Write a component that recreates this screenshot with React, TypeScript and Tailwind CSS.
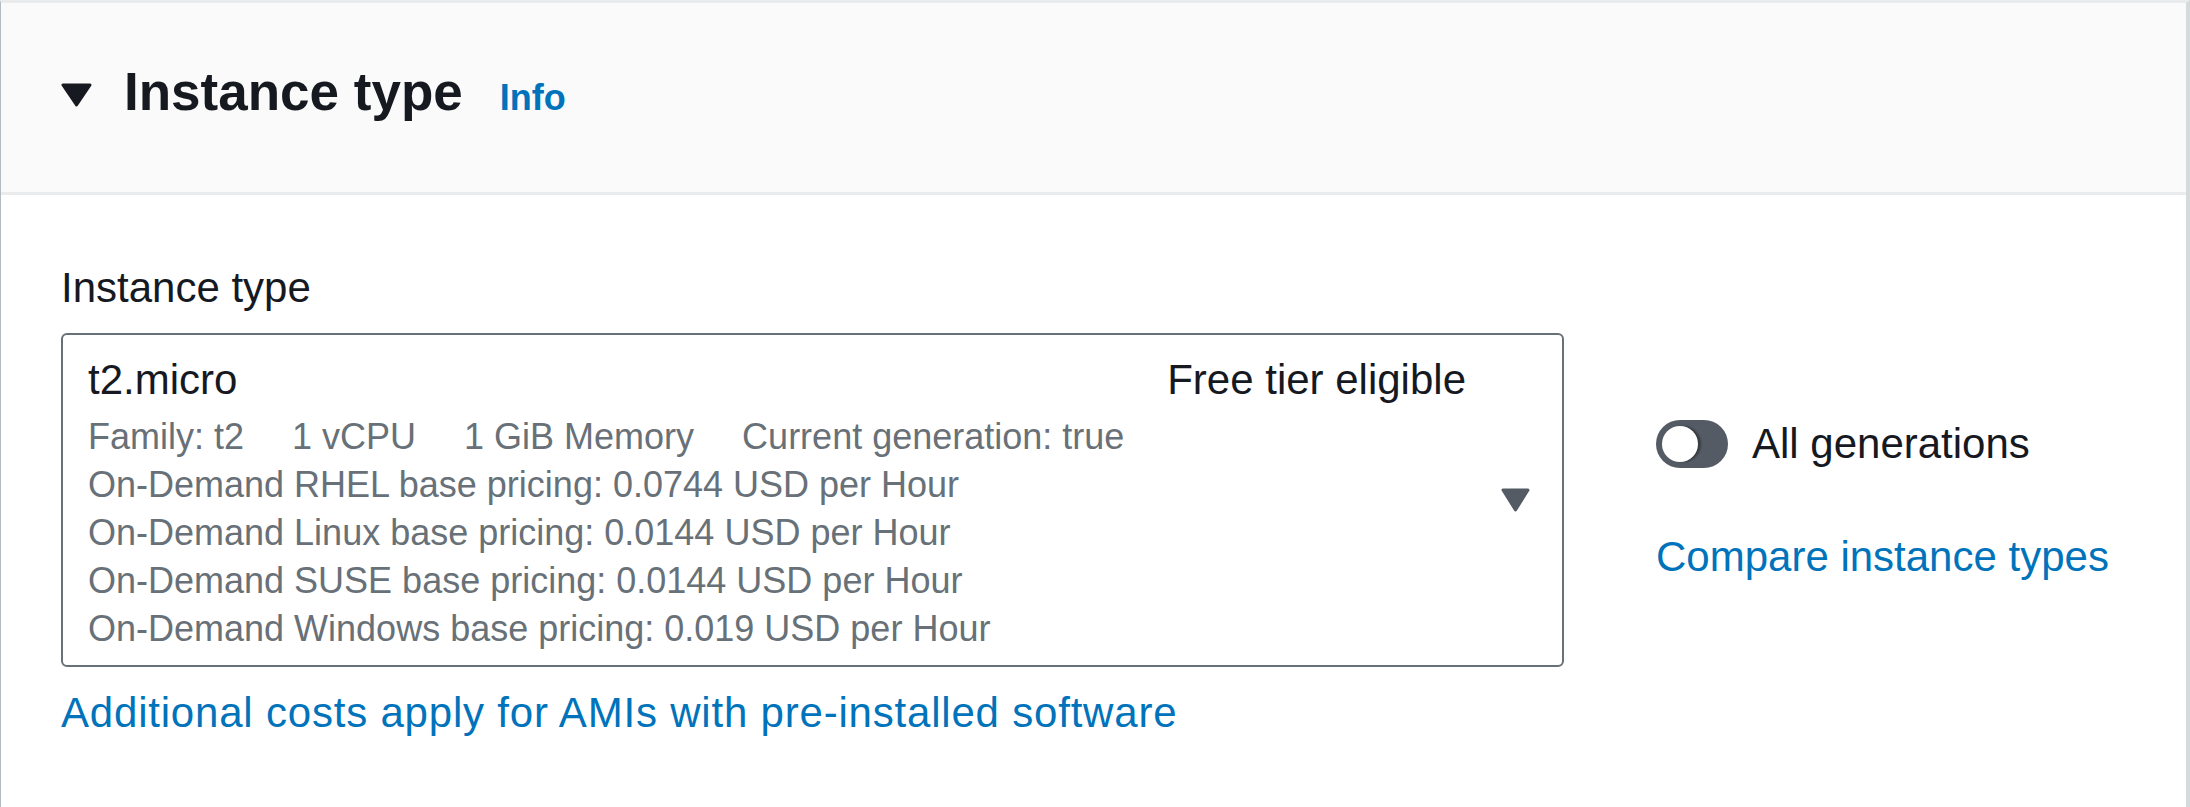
import React from "react";

function CaretDown({ w, h, color }: { w: number; h: number; color: string }) {
  return (
    <svg width={w} height={h} viewBox={`0 0 ${w} ${h}`} className="shrink-0">
      <polygon
        points={`2,2 ${w - 2},2 ${w / 2},${h - 2}`}
        fill={color}
        stroke={color}
        strokeWidth={3}
        strokeLinejoin="round"
      />
    </svg>
  );
}

export default function App() {
  const pricing = [
    "On-Demand RHEL base pricing: 0.0744 USD per Hour",
    "On-Demand Linux base pricing: 0.0144 USD per Hour",
    "On-Demand SUSE base pricing: 0.0144 USD per Hour",
    "On-Demand Windows base pricing: 0.019 USD per Hour",
  ];
  return (
    <div className="w-[2190px] h-[807px] overflow-hidden bg-white border-t-[3px] border-t-[#e9ebed] border-l border-l-[#b4bbc0] border-r-4 border-r-[#d5dbdb] font-['Liberation_Sans',Arial,sans-serif] text-[#16191f]">
      {/* Header */}
      <div className="h-[192px] bg-[#fafafa] border-b-[3px] border-b-[#e9ebed] pl-[60px] pt-[59px]">
        <div className="flex items-center h-[66px]">
          <CaretDown w={31} h={24} color="#16191f" />
          <div className="flex items-baseline ml-[32px]">
            <h2 className="text-[53px] leading-[66px] font-bold text-[#16191f]">Instance type</h2>
            <span className="ml-[37px] text-[36px] leading-[66px] font-bold text-[#0073bb]">Info</span>
          </div>
        </div>
      </div>

      {/* Body */}
      <div className="pt-[60px] pl-[60px] flex items-center">
        <div className="w-[1503px] shrink-0">
          <div className="text-[42px] leading-[66px] mb-[12px]">Instance type</div>
          <div className="rounded-[6px] border-2 border-[#687078] flex items-center pl-[25px] pr-[32px] py-[12px]">
            <div className="flex-1 min-w-0">
              <div className="flex justify-between text-[42px] leading-[66px] text-[#16191f]">
                <span>t2.micro</span>
                <span>Free tier eligible</span>
              </div>
              <div className="flex gap-[48px] text-[36px] leading-[48px] text-[#687078]">
                <span>Family: t2</span>
                <span>1 vCPU</span>
                <span>1 GiB Memory</span>
                <span>Current generation: true</span>
              </div>
              {pricing.map((p) => (
                <div key={p} className="text-[36px] leading-[48px] text-[#687078]">
                  {p}
                </div>
              ))}
            </div>
            <div className="ml-[35px]">
              <CaretDown w={29} h={24} color="#545b64" />
            </div>
          </div>
          <div className="mt-[13px] text-[42px] leading-[66px] tracking-[0.8px] text-[#0073bb]">
            Additional costs apply for AMIs with pre-installed software
          </div>
        </div>

        <div className="ml-[92px] flex flex-col">
          <div className="flex items-center h-[66px]">
            <div className="relative w-[72px] h-[48px] rounded-full bg-[#545b64] shrink-0">
              <div className="absolute left-[6px] top-[6px] w-[36px] h-[36px] rounded-full bg-white shadow-[3px_0_2px_rgba(0,0,0,0.35)]" />
            </div>
            <span className="ml-[24px] text-[42px] leading-[66px]">All generations</span>
          </div>
          <div className="mt-[47px] text-[42px] leading-[66px] text-[#0073bb]">Compare instance types</div>
        </div>
      </div>
    </div>
  );
}
